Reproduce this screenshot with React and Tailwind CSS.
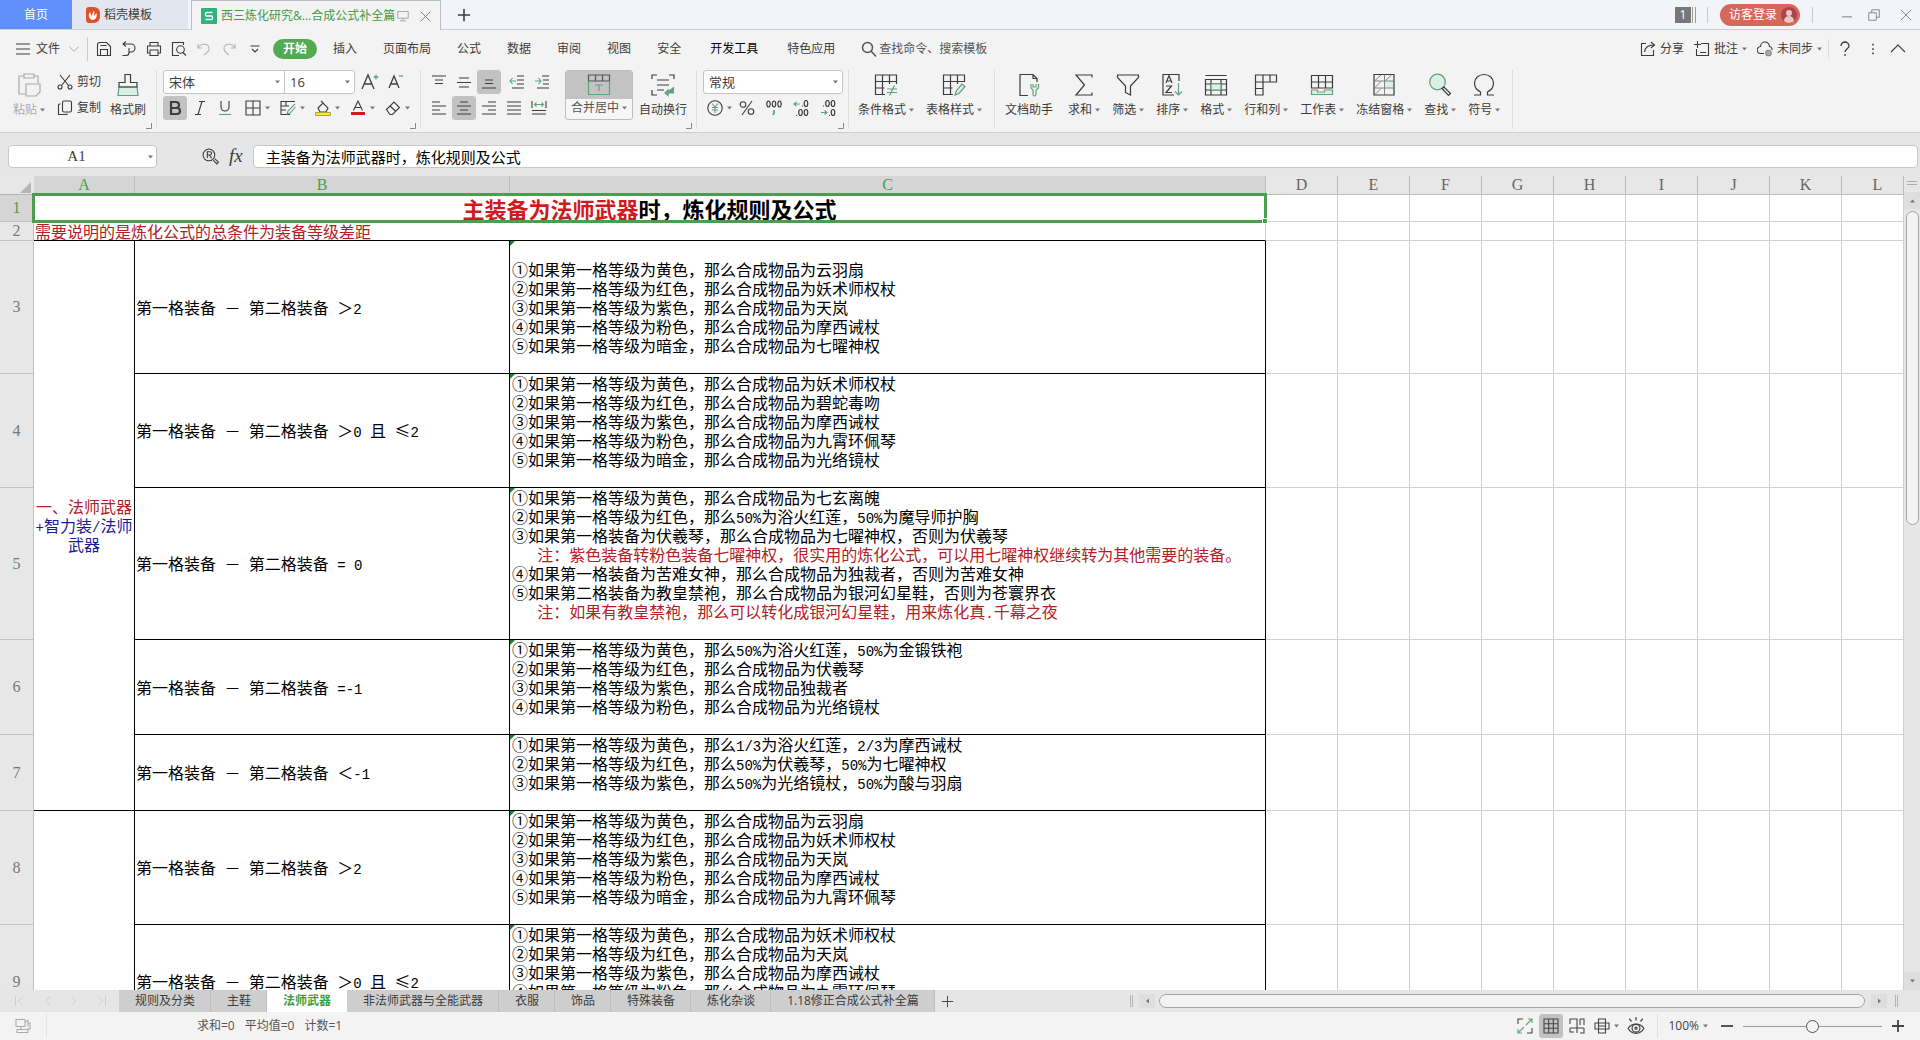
import React, { useState } from 'react';

const GREEN = '#5fa37c';

const Icon = ({ size = 16, box = 16, width = 1.1, className = '', children }) => (
  <svg
    width={size}
    height={size}
    viewBox={`0 0 ${box} ${box}`}
    fill="none"
    stroke="currentColor"
    strokeWidth={width}
    className={`shrink-0 ${className}`}
    aria-hidden="true"
  >
    {children}
  </svg>
);

const BigIcon = ({ children, className }) => (
  <Icon size={24} box={24} width={1.2} className={className}>{children}</Icon>
);

const Caret = ({ className = '' }) => (
  <svg width="5" height="4" viewBox="0 0 5 4" fill="#777" className={`shrink-0 ${className}`} aria-hidden="true">
    <path d="M0 0.5h5L2.5 3.5z" />
  </svg>
);

const icons = {
  menu: <Icon><path d="M1 3h14M1 8h14M1 13h14" /></Icon>,
  chevronDown: <Icon size={12} className="text-[#999]"><path d="M2 5l6 6 6-6" /></Icon>,
  save: <Icon><path d="M1.500 14.500v-11a2 2 0 0 1 2-2h7l4 4v9zM4.500 14.500v-6h7v6M4.500 4.500h6" /></Icon>,
  exportIcon: <Icon><path d="M2 3h8a4 4 0 0 1 0 8H8M5 .5L2 3l3 2.500M8 7v4.500a3 3 0 0 1-3 3H1.500" /></Icon>,
  print: <Icon><path d="M4 5V1.500h8V5M4 12H1.500V5h13v7H12M4 9h8v5.500H4z" /></Icon>,
  preview: <Icon><path d="M8 14.500H1.500v-13h11V4M15 14.500l-3-3" /><circle cx="9.500" cy="8.500" r="3.800" /></Icon>,
  undo: <Icon className="text-[#b5b5b5]"><path d="M2 3v4h4M2 7c3-5 10-5 11 0 .5 3-2 5-5 7" /></Icon>,
  redo: <Icon className="text-[#b5b5b5]"><path d="M14 3v4h-4M14 7c-3-5-10-5-11 0-.5 3 2 5 5 7" /></Icon>,
  more: <Icon size={12} width={1.5}><path d="M2 4h12M4 8l4 4 4-4" /></Icon>,
  search: <Icon width={1.5}><circle cx="6.500" cy="6.500" r="5" /><path d="M10 10l5 5.500" /></Icon>,
  share: <Icon><path d="M6 2.500H1.500v12h12V9M4.500 11C5 6.500 8 4 14 4M11 1l3.500 3-3.500 3" /></Icon>,
  comment: <Icon><path d="M7 2.500h7.500v12h-12V8M3.500 0v7M0 3.500h7M6 11.500h6" /></Icon>,
  sync: <Icon><path d="M7 12.500H4a3.500 3.500 0 0 1-.5-7 4.500 4.500 0 0 1 9 0A3 3 0 0 1 15 9" /><circle cx="11.500" cy="12" r="2.800" fill="#aaa" stroke="#888" /></Icon>,
  collapse: <Icon><path d="M1 11l7-7 7 7" /></Icon>,
  cut: <Icon><path d="M3 1l8.500 10.500M13 1L4.500 11.500" /><circle cx="3" cy="13" r="2" /><circle cx="13" cy="13" r="2" /></Icon>,
  copy: <Icon><rect x="5.500" y="1" width="9" height="11" rx="1.500" /><path d="M3.500 4H2.500A1 1 0 0 0 1.500 5v9.500h8.500v-1" /></Icon>,
  borders: <Icon><path d="M1 1h14v14H1zM8 1v14M1 8h14" /></Icon>,
  drawBorder: <Icon><path d="M10 14.500H1v-13h14M1 6h8M6 1.500V6M1 10h5" /><path d="M15 4l-7 7-1 3 3-1 5.500-6" stroke={GREEN} /></Icon>,
  fill: <Icon><path d="M3 8l5-5 5 5-2 4H5zM6 1l3 3" /><rect x=".5" y="12.500" width="15" height="3" rx="1" fill="#f4ee2b" stroke="#aaa53c" /></Icon>,
  eraser: <Icon><path d="M1.500 9.500L9 2l5.500 5.500-7 7H5zM5 6l6 5.500" /></Icon>,
};

const lines = {
  top: <Icon><path d="M1 2h14M4 6h8M4 9.500h8" /></Icon>,
  middle: <Icon><path d="M3 4h10M1 8.500h14M3 13h10" /></Icon>,
  bottom: <Icon><path d="M4 6h8M4 9.500h8M1 14h14" /></Icon>,
  outdent: <Icon><path d="M8 2h7M8 6h7M8 10h7M3 14h12" /><path d="M1 7h6M3.500 4L1 7l2.500 3" stroke={GREEN} /></Icon>,
  indent: <Icon><path d="M8 2h7M9 6h6M9 10h6M3 14h12" /><path d="M1 7h6M4.500 4L7 7l-2.500 3" stroke={GREEN} /></Icon>,
  left: <Icon><path d="M1 2h8M1 6h14M1 10h8M1 14h14" /></Icon>,
  center: <Icon><path d="M4 2h8M1 6h14M4 10h8M1 14h14" /></Icon>,
  right: <Icon><path d="M7 2h8M1 6h14M7 10h8M1 14h14" /></Icon>,
  justify: <Icon><path d="M1 2h14M1 6h14M1 10h14M1 14h14" /></Icon>,
  distribute: <Icon><path d="M1 1v7M15 1v7M1 10.500h14M1 14h14" /><path d="M3 4.500h10M5.500 2.500l-2 2 2 2M10.500 2.500l2 2-2 2" stroke={GREEN} /></Icon>,
};

const Label = ({ children, caret }) => (
  <span className="flex h-[18px] items-center gap-[3px] whitespace-nowrap">
    {children}
    {caret && <Caret />}
  </span>
);

const BigButton = ({ icon, label, caret = true, className = '' }) => (
  <button type="button" className={`flex shrink-0 flex-col items-center gap-1 pt-[3px] ${className}`}>
    {icon}
    <Label caret={caret}>{label}</Label>
  </button>
);

const SmallButton = ({ label, active, caret, children }) => (
  <button
    type="button"
    aria-label={label}
    className={`flex h-6 min-w-6 shrink-0 items-center justify-center gap-1 rounded-[3px] ${active ? 'bg-[#c2c2c2]' : ''}`}
  >
    {children}
    {caret && <Caret />}
  </button>
);

const Group = ({ corner, className = '', children }) => (
  <div className={`relative flex h-[59px] shrink-0 items-start border-r border-[#dedede] ${className}`}>
    {children}
    {corner && (
      <svg width="6" height="6" viewBox="0 0 6 6" className="absolute right-1 bottom-0" fill="none" stroke="#888" aria-hidden="true">
        <path d="M0 5.500h5.500V0" />
      </svg>
    )}
  </div>
);

const Picker = ({ label, options, className = '' }) => (
  <div className={`relative flex h-full items-center ${className}`}>
    <select aria-label={label} className="h-full w-full appearance-none bg-transparent pl-[5px] text-[13px] outline-none">
      {options.map((option) => (
        <option key={option}>{option}</option>
      ))}
    </select>
    <Caret className="pointer-events-none absolute right-1" />
  </div>
);

const TitleBar = () => (
  <div className="flex h-[30px] shrink-0 items-stretch border-b border-[#c8cdd6] bg-[#f2f4f9]">
    <button type="button" className="w-[72px] shrink-0 bg-[#5f8ffa] text-white">首页</button>
    <button type="button" className="flex w-[116px] shrink-0 items-center gap-1 bg-[#e2e6ef] pl-[14px]">
      <svg width="14" height="16" viewBox="0 0 14 16" aria-hidden="true">
        <path d="M3 0h5a6 6 0 0 1 6 6v4a6 6 0 0 1-6 6H3a3 3 0 0 1-3-3V3a3 3 0 0 1 3-3z" fill="#e2502b" />
        <path d="M6.500 13C2.500 12 2 8 4 5l1.500 4L8 3.500c1 2 0 4-.5 6L10.500 6c1 4-1 7-4 7z" fill="#fff" />
      </svg>
      稻壳模板
    </button>
    <div className="-mb-px ml-[3px] flex w-[250px] shrink-0 items-center border border-b-0 border-[#b9bec8] bg-[#f3f3f3] pt-px pl-[9px] text-[#3f9b45]">
      <svg width="16" height="16" viewBox="0 0 16 16" className="mr-1 shrink-0" aria-hidden="true">
        <rect width="16" height="16" rx="1" fill="#2fb27e" />
        <path d="M11.500 4.500h-6a1.200 1.200 0 0 0-1 1.200v1.100a1.200 1.200 0 0 0 1 1.200h5a1.200 1.200 0 0 1 1 1.200v1.100a1.200 1.200 0 0 1-1 1.200h-6" fill="none" stroke="#fff" strokeWidth="1.300" />
      </svg>
      <span className="whitespace-nowrap">西三炼化研究&amp;...合成公式补全篇</span>
      <Icon size={12} className="ml-[2px] text-[#999]"><path d="M1 2h14v9H1zM8 11v3M4 14.500h8" /></Icon>
      <button type="button" aria-label="关闭标签" className="ml-auto mr-2 text-[#777]">
        <Icon size={13}><path d="M2 2l12 12M14 2L2 14" /></Icon>
      </button>
    </div>
    <button type="button" aria-label="新建" className="ml-4 shrink-0">
      <Icon size={14} width={1.800}><path d="M8 1v14M1 8h14" /></Icon>
    </button>
    <div className="ml-auto flex items-center pt-px text-[#777]">
      <span className="flex h-4 w-4 items-center justify-center bg-[#777] text-white">1</span>
      <span className="ml-px h-4 w-1 border-x border-[#999]" />
      <span className="ml-[11px] h-4 w-px bg-[#ccc]" />
      <button type="button" className="ml-3 flex h-[22px] items-center gap-1 rounded-full bg-[#d6675b] pl-[9px] pr-[3px] text-white">
        访客登录
        <svg width="16" height="16" viewBox="0 0 16 16" aria-hidden="true">
          <circle cx="8" cy="8" r="8" fill="#a9444a" />
          <circle cx="8" cy="6" r="3" fill="#ecc5c8" />
          <path d="M3 14a5 5 0 0 1 10 0 8 8 0 0 1-10 0z" fill="#ecc5c8" />
        </svg>
      </button>
      <span className="ml-3 h-4 w-px bg-[#ccc]" />
      <button type="button" aria-label="最小化" className="ml-[29px]"><Icon size={10} width={1.500}><path d="M0 11h16" /></Icon></button>
      <button type="button" aria-label="还原" className="ml-4"><Icon size={12}><path d="M1 5h10v10H1zM5 5V1h10v10h-4" /></Icon></button>
      <button type="button" aria-label="关闭" className="ml-5 mr-2"><Icon size={12}><path d="M1 1l14 14M15 1L1 15" /></Icon></button>
    </div>
  </div>
);

const menus = ['插入', '页面布局', '公式', '数据', '审阅', '视图', '安全', '开发工具', '特色应用'];

const MenuBar = () => (
  <div className="flex h-[37px] shrink-0 items-center pt-px pr-[14px] pl-[15px]">
    <button type="button" className="flex items-center gap-[5px]">
      {icons.menu}文件
      <span className="ml-[3px]">{icons.chevronDown}</span>
    </button>
    <span className="mr-2 ml-[7px] h-6 w-px bg-[#ccc]" />
    <div className="flex items-center gap-[9px]">
      <button type="button" aria-label="保存">{icons.save}</button>
      <button type="button" aria-label="输出">{icons.exportIcon}</button>
      <button type="button" aria-label="打印">{icons.print}</button>
      <button type="button" aria-label="打印预览">{icons.preview}</button>
      <button type="button" aria-label="撤销">{icons.undo}</button>
      <button type="button" aria-label="恢复">{icons.redo}</button>
      <button type="button" aria-label="更多" className="ml-[3px]">{icons.more}</button>
    </div>
    <nav className="ml-3 flex items-center gap-[26px] whitespace-nowrap">
      <button type="button" className="-mr-[10px] h-5 rounded-full bg-[#52ab52] px-[10px] font-bold text-white">开始</button>
      {menus.map((menu) => (
        <button key={menu} type="button" className={menu === '开发工具' ? 'mx-[3px] text-black' : ''}>{menu}</button>
      ))}
      <button type="button" className="flex items-center gap-[2px] text-[#555]">{icons.search}查找命令、搜索模板</button>
    </nav>
    <div className="ml-auto flex items-center whitespace-nowrap">
      <button type="button" className="flex items-center gap-1">{icons.share}分享</button>
      <button type="button" className="ml-[10px] flex items-center gap-1">{icons.comment}批注<Caret /></button>
      <button type="button" className="ml-[10px] flex items-center gap-1">{icons.sync}未同步<Caret /></button>
      <span className="ml-[6px] h-5 w-px bg-[#ddd]" />
      <button type="button" aria-label="帮助" className="ml-2">
        <Icon width={1.300}><path d="M4 5a4 4 0 0 1 8 0c0 2.500-4 3-4 6M8 13v2" /></Icon>
      </button>
      <button type="button" aria-label="选项" className="ml-[7px] px-[6px]">
        <Icon size={14}><path d="M7 2h2v2H7zM7 7h2v2H7zM7 12h2v2H7z" fill="#555" stroke="none" /></Icon>
      </button>
      <button type="button" aria-label="折叠功能区" className="ml-1">{icons.collapse}</button>
    </div>
  </div>
);

const sheetTools = [
  { label: '求和', icon: <BigIcon><path d="M20 4.500V2H4l8.500 10L4 22h16v-2.500" /></BigIcon> },
  { label: '筛选', icon: <BigIcon><path d="M1.500 2h21v2.500L14.500 13v9l-5-2.500V13l-8-8.500z" /></BigIcon> },
  {
    label: '排序',
    icon: (
      <BigIcon>
        <path d="M19 8V1.500H3V22h11M6 10l3-7.500L12 10M7 8h4M6 13h5.500L6 19.500h6" />
        <path d="M18.500 10v12M15 18.500l3.500 3.500 3.500-3.500" stroke={GREEN} />
      </BigIcon>
    ),
  },
  {
    label: '格式',
    icon: (
      <BigIcon>
        <path d="M1.500 2.500h21M1.500 6.500h21V22h-21zM1.500 11h21M1.500 17h21M7 6.500V22M17 6.500V22" />
        <path d="M7 11h10v6H7z" stroke={GREEN} fill="#dcefe4" />
      </BigIcon>
    ),
  },
  { label: '行和列', icon: <BigIcon><path d="M1.500 2h21v7H9v13H1.500zM1.500 9H9M1.500 15.500H9M9 2v7M16 2v7" /></BigIcon> },
  {
    label: '工作表',
    icon: (
      <BigIcon>
        <path d="M1.500 2.500h21V15h-21zM1.500 9h21M8.500 2.500V15M15.500 2.500V15" />
        <path d="M1.500 17h6v2h7v-2h8v4.500h-21z" stroke={GREEN} fill="#dcefe4" />
      </BigIcon>
    ),
  },
  {
    label: '冻结窗格',
    icon: (
      <BigIcon width={1}>
        <path d="M12.500 8H22v7h-9.500z" fill="#dcefe4" stroke="none" />
        <path d="M2 1.500h20V22H2z" />
        <path d="M2 8h20M2 15h20M12.500 1.500V22M3 7.500l6-5.500M13.500 7.500l6-5.500M3 14.500L9 8.500M3 21.500l6-6" strokeWidth="0.900" stroke="#777" />
      </BigIcon>
    ),
  },
  {
    label: '查找',
    icon: (
      <BigIcon>
        <circle cx="9.500" cy="9" r="7.800" stroke={GREEN} fill="#dcefe4" />
        <path d="M14 15.500l6.500 7 2-2-6.500-6.500z" />
      </BigIcon>
    ),
  },
  { label: '符号', icon: <BigIcon><path d="M2 22h6.500v-3C4.500 17 2.500 13.500 2.500 10a9.500 8.500 0 0 1 19 0c0 3.500-2 7-6 9v3H22" /></BigIcon> },
];

const Ribbon = () => (
  <div className="flex h-[66px] shrink-0 border-b border-[#cfcfcf] pt-[3px]">
    <Group corner className="pl-[13px] pr-[10px]">
      <BigButton
        label="粘贴"
        className="text-[#aaa]"
        icon={<BigIcon><path d="M7 3H2v18h6M17 3h4v7M7 1h10v4H7zM9 11h14v8l-4 4H9z" /></BigIcon>}
      />
      <div className="ml-3 flex flex-col gap-[2px]">
        <button type="button" className="flex h-6 items-center gap-1">{icons.cut}剪切</button>
        <button type="button" className="flex h-6 items-center gap-1">{icons.copy}复制</button>
      </div>
      <BigButton
        label="格式刷"
        caret={false}
        className="ml-[9px]"
        icon={
          <BigIcon>
            <path d="M3 14h18l1 8.500H2z" fill="#dcefe4" stroke={GREEN} />
            <path d="M3 14V9.500h6V1.500h5.500v8H21V14z" />
          </BigIcon>
        }
      />
    </Group>

    <Group corner className="pl-[6px] pr-[10px]">
      <div className="flex flex-col gap-[2px]">
        <div className="flex h-6 items-center">
          <div className="flex h-6 w-[192px] divide-x divide-[#c4c4c4] rounded-[3px] border border-[#c4c4c4] bg-white">
            <Picker label="字体" options={['宋体', '黑体']} className="w-[121px]" />
            <Picker label="字号" options={['16', '12']} className="w-[69px]" />
          </div>
          <button type="button" aria-label="增大字号" className="ml-[6px]">
            <Icon size={18} box={18} width={1.300}><path d="M1 16L7 2l6 14M3 11h8" /><path d="M12.500 4h5M15 1.500v5" stroke={GREEN} /></Icon>
          </button>
          <button type="button" aria-label="减小字号" className="ml-2">
            <Icon size={18} box={18} width={1.300}><path d="M2 15L7 3l5 12M4 11h6" /><path d="M12 3h4" stroke={GREEN} /></Icon>
          </button>
        </div>
        <div className="flex items-center gap-px">
          <SmallButton label="加粗" active><Icon width={2.200}><path d="M4 2h5a3 3 0 0 1 0 6H4zM4 8h6a3 3 0 0 1 0 6H4z" /></Icon></SmallButton>
          <SmallButton label="倾斜"><Icon><path d="M7 1.500h6M3 14.500h6M10 1.500l-4 13" /></Icon></SmallButton>
          <SmallButton label="下划线"><Icon><path d="M4 1v6a4 4 0 0 0 8 0V1" /><path d="M2 14.500h12" stroke={GREEN} /></Icon></SmallButton>
          <div className="ml-[7px] flex items-center gap-[10px]">
            <SmallButton label="边框" caret>{icons.borders}</SmallButton>
            <SmallButton label="绘图边框" caret>{icons.drawBorder}</SmallButton>
            <SmallButton label="填充颜色" caret>{icons.fill}</SmallButton>
            <SmallButton label="字体颜色" caret>
              <Icon><path d="M3.500 10.500L8 1l4.500 9.500M5 7.500h6" /><path d="M1 13.500h14" stroke="#c81e1e" strokeWidth="3" /></Icon>
            </SmallButton>
            <SmallButton label="清除" caret>{icons.eraser}</SmallButton>
          </div>
        </div>
      </div>
    </Group>

    <Group corner className="pl-[6px] pr-[9px]">
      <div className="flex flex-col gap-[2px]">
        <div className="flex gap-px">
          <SmallButton label="顶端对齐">{lines.top}</SmallButton>
          <SmallButton label="垂直居中">{lines.middle}</SmallButton>
          <SmallButton label="底端对齐" active>{lines.bottom}</SmallButton>
          <span className="w-[2px]" />
          <SmallButton label="减少缩进">{lines.outdent}</SmallButton>
          <SmallButton label="增加缩进">{lines.indent}</SmallButton>
        </div>
        <div className="flex gap-px">
          <SmallButton label="左对齐">{lines.left}</SmallButton>
          <SmallButton label="水平居中" active>{lines.center}</SmallButton>
          <SmallButton label="右对齐">{lines.right}</SmallButton>
          <SmallButton label="两端对齐">{lines.justify}</SmallButton>
          <SmallButton label="分散对齐">{lines.distribute}</SmallButton>
        </div>
      </div>
      <button type="button" className="ml-[11px] flex h-[50px] w-[68px] flex-col items-center overflow-hidden rounded-[3px] border border-[#bdbdbd] bg-[#f6f6f6] text-[#555]">
        <span className="flex h-7 w-full items-center justify-center bg-[#c3c3c3]">
          <BigIcon>
            <path d="M1.500 8V2h21v6M8.500 2v6M15.500 2v6M1.500 8h21" />
            <path d="M1.500 8v13.500h21V8M8 12h8M12 12v6" stroke={GREEN} />
          </BigIcon>
        </span>
        <Label caret>合并居中</Label>
      </button>
      <BigButton
        label="自动换行"
        caret={false}
        className="ml-[6px]"
        icon={
          <BigIcon>
            <path d="M1 6V2h5M18 2h5v4M1 17v5h5M6 7h12M6 12h12M6 17h7" />
            <path d="M22.500 14v6H14M17 17l-3 3 3 2.500z" stroke={GREEN} fill="#5fa37c" />
          </BigIcon>
        }
      />
    </Group>

    <Group corner className="pl-[6px] pr-[5px]">
      <div className="flex flex-col gap-[2px]">
        <div className="h-6 w-[140px] rounded-[3px] border border-[#c4c4c4] bg-white">
          <Picker label="数字格式" options={['常规', '数值']} className="w-full" />
        </div>
        <div className="flex items-center justify-between pl-1 pr-[3px]">
          <SmallButton label="货币" caret>
            <Icon><circle cx="8" cy="8" r="7.200" /><path d="M5 3.500L8 7l3-3.500M8 7v6M5 7.500h6M5 10h6" stroke={GREEN} /></Icon>
          </SmallButton>
          <SmallButton label="百分比">
            <Icon><circle cx="4" cy="4.500" r="2.800" /><circle cx="12" cy="11.500" r="2.800" /><path d="M13 1L3 15" /></Icon>
          </SmallButton>
          <SmallButton label="千位分隔">
            <Icon width={1.200}><ellipse cx="2.500" cy="4" rx="1.700" ry="3" /><ellipse cx="8" cy="4" rx="1.700" ry="3" /><ellipse cx="13.500" cy="4" rx="1.700" ry="3" /><path d="M8 10v3l-1 2" stroke={GREEN} strokeWidth="1.800" /></Icon>
          </SmallButton>
          <SmallButton label="增加小数位">
            <Icon width={1.200}><ellipse cx="13" cy="3.500" rx="1.800" ry="3" /><ellipse cx="7.500" cy="12.500" rx="1.800" ry="3" /><ellipse cx="13" cy="12.500" rx="1.800" ry="3" /><path d="M9 6h1M3 15.500h1" /><path d="M1 4h6M3.500 2L1 4l2.500 2" stroke={GREEN} /></Icon>
          </SmallButton>
          <SmallButton label="减少小数位">
            <Icon width={1.200}><ellipse cx="7.500" cy="3.500" rx="1.800" ry="3" /><ellipse cx="13" cy="3.500" rx="1.800" ry="3" /><ellipse cx="13" cy="12.500" rx="1.800" ry="3" /><path d="M3 6h1M9 15.500h1" /><path d="M1 12.500h6M4.500 10.500l2.500 2-2.500 2" stroke={GREEN} /></Icon>
          </SmallButton>
        </div>
      </div>
    </Group>

    <Group className="gap-3 pl-[9px] pr-3">
      <BigButton
        label="条件格式"
        icon={
          <BigIcon>
            <path d="M11 21.500H1.500V2h21v9M1.500 8.500h21M8.500 2v19.500M15.500 2v9M1.500 15h9" />
            <path d="M13 16h10M13 19.500h10M20.500 12.500l-5 10" stroke={GREEN} />
          </BigIcon>
        }
      />
      <BigButton
        label="表格样式"
        icon={
          <BigIcon>
            <path d="M11 21.500H1.500V2h21v7M1.500 8.500h21M8.500 2v19.500M15.500 2v9M1.500 15h9" />
            <path d="M13 22l1.500-4.500L20 11l3 2.500-6 7z" stroke={GREEN} fill="#dcefe4" />
          </BigIcon>
        }
      />
    </Group>

    <Group className="gap-3 pl-[10px] pr-3">
      <BigButton
        label="文档助手"
        caret={false}
        className="mr-[3px]"
        icon={
          <BigIcon>
            <path d="M11 22.500H3V1.500h13l4 4V9M16 1.500v4h4" />
            <path d="M14 11v4l2 2v4.500a1.500 1.500 0 0 0 3 0V17l2.500-2v-4M16 11v3h3v-3" stroke={GREEN} />
          </BigIcon>
        }
      />
      {sheetTools.map((tool) => (
        <BigButton key={tool.label} label={tool.label} icon={tool.icon} />
      ))}
    </Group>
  </div>
);

const FormulaBar = ({ value, onChange }) => (
  <div className="flex h-[43px] shrink-0 items-start bg-[#e6e6e6] pt-3 pr-[2px] pl-2">
    <div className="relative flex w-[149px] shrink-0 items-center">
      <input
        aria-label="名称框"
        defaultValue="A1"
        className="h-[23px] w-full rounded-[4px] border border-[#c8c8c8] bg-white pr-3 text-center font-['Liberation_Serif','Noto_Sans_CJK_SC',serif] text-[15px] outline-none"
      />
      <Caret className="absolute right-1" />
    </div>
    <button type="button" aria-label="浏览公式" className="ml-[45px] mt-[3px]">
      <Icon size={17} width={1}><circle cx="6.500" cy="6.500" r="5.500" /><path d="M5 9.500v-6h2.500a1.500 1.500 0 0 1 0 3H5M7 6.500l2 3M10.500 11.500l3.500 3.500 1.500-1.500-3.500-3.500" /></Icon>
    </button>
    <button type="button" aria-label="插入函数" className="ml-[10px] font-['Liberation_Serif',serif] text-[19px] leading-[22px] italic">fx</button>
    <input
      aria-label="编辑栏"
      value={value}
      onChange={(e) => onChange(e.target.value)}
      className="ml-[10px] h-[23px] min-w-0 flex-1 rounded-[4px] border border-[#c8c8c8] bg-white pl-3 text-[15px] text-black outline-none"
    />
  </div>
);

// half-width characters are set in a monospaced face, about half as wide as a full-width one
const CellText = ({ text }) =>
  text.split(/([\x20-\x7e]+)/).map((part, i) =>
    i % 2 ? (
      <span key={i} className="font-['Liberation_Mono',monospace] text-[14px] leading-none">{part}</span>
    ) : (
      part
    )
  );

const blue = 'text-[#1c1c96]';
const red = 'text-[#b32025]';

const rows = [
  {
    height: 'h-[133px]',
    middle: true,
    condition: '第一格装备 － 第二格装备 ＞2',
    results: [
      '①如果第一格等级为黄色，那么合成物品为云羽扇',
      '②如果第一格等级为红色，那么合成物品为妖术师权杖',
      '③如果第一格等级为紫色，那么合成物品为天岚',
      '④如果第一格等级为粉色，那么合成物品为摩西诫杖',
      '⑤如果第一格等级为暗金，那么合成物品为七曜神权',
    ],
  },
  {
    height: 'h-[114px]',
    condition: '第一格装备 － 第二格装备 ＞0 且 ≤2',
    results: [
      '①如果第一格等级为黄色，那么合成物品为妖术师权杖',
      '②如果第一格等级为红色，那么合成物品为碧蛇毒吻',
      '③如果第一格等级为紫色，那么合成物品为摩西诫杖',
      '④如果第一格等级为粉色，那么合成物品为九霄环佩琴',
      '⑤如果第一格等级为暗金，那么合成物品为光络镜杖',
    ],
  },
  {
    height: 'h-[152px]',
    condition: '第一格装备 － 第二格装备 = 0',
    results: [
      '①如果第一格等级为黄色，那么合成物品为七玄离魄',
      '②如果第一格等级为红色，那么50%为浴火红莲，50%为魔导师护胸',
      '③如果第一格装备为伏羲琴，那么合成物品为七曜神权，否则为伏羲琴',
      '   注：紫色装备转粉色装备七曜神权，很实用的炼化公式，可以用七曜神权继续转为其他需要的装备。',
      '④如果第一格装备为苦难女神，那么合成物品为独裁者，否则为苦难女神',
      '⑤如果第二格装备为教皇禁袍，那么合成物品为银河幻星鞋，否则为苍寰界衣',
      '   注：如果有教皇禁袍，那么可以转化成银河幻星鞋，用来炼化真.千幕之夜',
    ],
  },
  {
    height: 'h-[95px]',
    condition: '第一格装备 － 第二格装备 =-1',
    results: [
      '①如果第一格等级为黄色，那么50%为浴火红莲，50%为金锻铁袍',
      '②如果第一格等级为红色，那么合成物品为伏羲琴',
      '③如果第一格等级为紫色，那么合成物品独裁者',
      '④如果第一格等级为粉色，那么合成物品为光络镜杖',
    ],
  },
  {
    height: 'h-[76px]',
    condition: '第一格装备 － 第二格装备 ＜-1',
    results: [
      '①如果第一格等级为黄色，那么1/3为浴火红莲，2/3为摩西诫杖',
      '②如果第一格等级为红色，那么50%为伏羲琴，50%为七曜神权',
      '③如果第一格等级为紫色，那么50%为光络镜杖，50%为酸与羽扇',
    ],
  },
  {
    height: 'h-[114px]',
    condition: '第一格装备 － 第二格装备 ＞2',
    results: [
      '①如果第一格等级为黄色，那么合成物品为云羽扇',
      '②如果第一格等级为红色，那么合成物品为妖术师权杖',
      '③如果第一格等级为紫色，那么合成物品为天岚',
      '④如果第一格等级为粉色，那么合成物品为摩西诫杖',
      '⑤如果第一格等级为暗金，那么合成物品为九霄环佩琴',
    ],
  },
  {
    height: 'h-[114px]',
    condition: '第一格装备 － 第二格装备 ＞0 且 ≤2',
    results: [
      '①如果第一格等级为黄色，那么合成物品为妖术师权杖',
      '②如果第一格等级为红色，那么合成物品为天岚',
      '③如果第一格等级为紫色，那么合成物品为摩西诫杖',
      '④如果第一格等级为粉色，那么合成物品为九霄环佩琴',
    ],
  },
];

const emptyColumns = ['D', 'E', 'F', 'G', 'H', 'I', 'J', 'K', 'L'];

const EmptyCells = () =>
  emptyColumns.map((column) => <td key={column} className="border-r border-b border-[#d0d0d0]" />);

const RowHeader = ({ number, active }) => (
  <th
    scope="row"
    className={`border-r border-b border-[#c2c2c2] font-['Liberation_Serif',serif] text-[16px] leading-[18px] font-normal ${
      active ? 'bg-[#d5d5d5] text-[#4b9e4b]' : 'bg-[#e7e7e7] text-[#777]'
    }`}
  >
    {number}
  </th>
);

const Sheet = () => (
  <div className="min-w-0 flex-1 overflow-hidden bg-white">
    <table className="w-full table-fixed border-separate border-spacing-0 font-['Noto_Sans_CJK_SC',sans-serif] text-[16px] leading-[19px] whitespace-pre text-black">
      <colgroup>
        <col className="w-[34px]" />
        <col className="w-[101px]" />
        <col className="w-[375px]" />
        <col className="w-[756px]" />
        {emptyColumns.map((column) => (
          <col key={column} className={column === 'L' ? '' : 'w-[72px]'} />
        ))}
      </colgroup>
      <thead>
        <tr className="h-[19px] font-['Liberation_Serif',serif] leading-[18px]">
          <td className="border-b border-[#b5b5b5] bg-[#e7e7e7]">
            <svg width="11" height="11" viewBox="0 0 11 11" className="mt-1 mr-[3px] ml-auto" aria-hidden="true">
              <path d="M11 0v11H0z" fill="#b5b5b5" />
            </svg>
          </td>
          {['A', 'B', 'C'].map((column) => (
            <th key={column} scope="col" className="border-r border-b border-[#bcbcbc] bg-[#d5d5d5] font-normal text-[#4b9e4b]">
              {column}
            </th>
          ))}
          {emptyColumns.map((column) => (
            <th key={column} scope="col" className="overflow-hidden border-r border-b border-[#bcbcbc] bg-[#e7e7e7] font-normal text-[#666]">
              <div className="w-[71px]">{column}</div>
            </th>
          ))}
        </tr>
      </thead>
      <tbody>
        <tr className="h-[27px]">
          <RowHeader number={1} active />
          <td colSpan={3} className="relative z-10 border-r border-b border-[#d0d0d0] text-center text-[22px] leading-[26px] font-bold">
            <span className="text-[#d3191c]">主装备为法师武器</span>时，炼化规则及公式
            <span className="absolute -inset-[2px] border-[3px] border-[#4b9e4b]" />
            <span className="absolute -right-[3px] -bottom-[3px] size-[6px] border border-white bg-[#4b9e4b]" />
          </td>
          <EmptyCells />
        </tr>
        <tr className="h-[19px]">
          <RowHeader number={2} />
          <td colSpan={3} className={`border-r border-b border-r-[#d0d0d0] border-b-black pl-px leading-[18px] ${red}`}>
            需要说明的是炼化公式的总条件为装备等级差距
          </td>
          <EmptyCells />
        </tr>
        {rows.map((row, index) => (
          <tr key={index} className={row.height}>
            <RowHeader number={index + 3} />
            {index === 0 && (
              <td rowSpan={5} className={`border-r border-b border-black text-center ${blue}`}>
                <span className={red}>一、法师武器</span>
                <br />
                <CellText text="+智力装/法师" />
                <br />
                武器
              </td>
            )}
            {index === 5 && <td rowSpan={2} className="border-r border-b border-black" />}
            <td className="border-r border-b border-black pl-px">
              <CellText text={row.condition} />
            </td>
            <td className={`relative border-r border-b border-black pl-[2px] ${row.middle ? 'align-middle' : 'align-top'}`}>
              <svg width="5" height="5" viewBox="0 0 5 5" className="absolute top-0 left-0" aria-hidden="true">
                <path d="M0 0h5L0 5z" fill="#1f7a2e" />
              </svg>
              {row.results.map((line) => (
                <div key={line} className={`h-[19px] ${line.startsWith(' ') ? red : ''}`}>
                  <CellText text={line} />
                </div>
              ))}
            </td>
            <EmptyCells />
          </tr>
        ))}
      </tbody>
    </table>
  </div>
);

const VerticalScroll = () => (
  <div className="flex w-4 shrink-0 flex-col items-center bg-[#e6e6e6]">
    <span className="mt-[5px] h-1 w-[10px] border-y border-[#aaa]" />
    <button type="button" aria-label="向上滚动" className="mt-[7px] flex h-[17px] w-full items-center justify-center bg-[#dedede]">
      <Caret className="rotate-180" />
    </button>
    <div className="mt-[2px] h-[314px] w-[13px] rounded-full border border-[#a5a5a5] bg-[#f3f3f3]" />
    <button type="button" aria-label="向下滚动" className="mt-auto flex h-[18px] w-full items-center justify-center bg-[#dedede]">
      <Caret />
    </button>
  </div>
);

const tabs = ['规则及分类', '主鞋', '法师武器', '非法师武器与全能武器', '衣服', '饰品', '特殊装备', '炼化杂谈', '1.18修正合成公式补全篇'];

const SheetTabs = ({ active, onSelect }) => (
  <div className="flex h-[22px] shrink-0 items-stretch bg-[#e6e6e6]">
    <div className="flex w-[119px] shrink-0 items-center gap-[15px] pl-[14px] text-[#c8c8c8]">
      <button type="button" aria-label="第一张"><Icon size={12}><path d="M2 1v14M12 2L6 8l6 6" /></Icon></button>
      <button type="button" aria-label="上一张"><Icon size={12}><path d="M12 2L6 8l6 6" /></Icon></button>
      <button type="button" aria-label="下一张"><Icon size={12}><path d="M4 2l6 6-6 6" /></Icon></button>
      <button type="button" aria-label="最后一张"><Icon size={12}><path d="M4 2l6 6-6 6M14 1v14" /></Icon></button>
    </div>
    {tabs.map((tab) => (
      <button
        key={tab}
        type="button"
        onClick={() => onSelect(tab)}
        className={`shrink-0 border-r pr-[15px] pl-4 whitespace-nowrap ${
          tab === active ? 'border-white bg-white font-bold text-[#3fa03f]' : 'border-[#bdbdbd] bg-[#cecece]'
        }`}
      >
        {tab}
      </button>
    ))}
    <button type="button" aria-label="新建工作表" className="ml-[6px] shrink-0">
      <Icon size={13}><path d="M8 1v14M1 8h14" /></Icon>
    </button>
    <div className="ml-auto flex w-[790px] items-center">
      <span className="h-3 w-[3px] border-x border-[#b5b5b5]" />
      <button type="button" aria-label="向左滚动" className="ml-[6px] flex h-[14px] w-4 items-center justify-center bg-[#dedede]">
        <Caret className="rotate-90" />
      </button>
      <div className="ml-1 h-[14px] flex-1 rounded-full border border-[#a5a5a5] bg-[#f3f3f3]" />
      <button type="button" aria-label="向右滚动" className="ml-[6px] flex h-[14px] w-4 items-center justify-center bg-[#dedede]">
        <Caret className="-rotate-90" />
      </button>
      <span className="mr-[22px] ml-2 h-3 w-[3px] border-x border-[#b5b5b5]" />
    </div>
  </div>
);

const StatusBar = () => {
  const [zoom, setZoom] = useState(50);

  return (
    <div className="flex h-7 shrink-0 items-center pr-4 pl-[15px] text-[#555]">
      <Icon className="text-[#aaa]"><path d="M1 1.500h9v7H1zM10 4l3-1.500v6M13 5h2v6h-3M6 8.500V11M2 14.500v-3h11v3z" /></Icon>
      <span className="ml-[15px] h-6 w-px bg-[#e4e4e4]" />
      <div className="ml-[150px] flex gap-[10px]">
        <span>求和=0</span>
        <span>平均值=0</span>
        <span>计数=1</span>
      </div>
      <div className="ml-auto flex items-center text-[#444]">
        <button type="button" aria-label="全屏显示">
          <Icon><path d="M1 6V1h5M15 10v5h-5" /><path d="M9 7l6-6M11 1h4v4M7 9l-6 6M1 11v4h4" stroke={GREEN} /></Icon>
        </button>
        <button type="button" aria-label="普通视图" className="ml-[6px] flex size-6 items-center justify-center rounded-[3px] bg-[#c2c2c2]">
          <Icon><path d="M1 1h14v14H1zM1 5.700h14M1 10.300h14M5.700 1v14M10.300 1v14" /></Icon>
        </button>
        <button type="button" aria-label="分页预览" className="ml-[6px]">
          <Icon><path d="M1 6V1h7v14M1 10h14M11 1h4v6M1 10v4h4M15 10v5h-4M11 1v6" /></Icon>
        </button>
        <button type="button" aria-label="页面布局视图" className="ml-[9px] flex items-center gap-1">
          <Icon><path d="M4.500 1h7v14h-7zM1 5h14v6H1zM4.500 8h7" /></Icon>
          <Caret />
        </button>
        <button type="button" aria-label="护眼模式" className="ml-2">
          <Icon size={18}><path d="M1 10c3-5 11-5 14 0-3 6-11 6-14 0zM8 0v3M2 1.500l2 2.500M14 1.500L12 4" /><circle cx="8" cy="10" r="3.500" /><circle cx="8" cy="10" r="1" /></Icon>
        </button>
        <span className="ml-3 h-6 w-px bg-[#e0e0e0]" />
        <button type="button" className="ml-[10px] flex items-center gap-1">100%<Caret /></button>
        <button type="button" aria-label="缩小" className="ml-[13px]">
          <Icon size={12} width={2.400}><path d="M0 8h16" /></Icon>
        </button>
        <input
          type="range"
          aria-label="显示比例"
          value={zoom}
          onChange={(e) => setZoom(e.target.value)}
          className="mx-[10px] h-4 w-[139px] appearance-none bg-transparent [&::-webkit-slider-runnable-track]:h-px [&::-webkit-slider-runnable-track]:bg-[#999] [&::-webkit-slider-thumb]:-mt-[6px] [&::-webkit-slider-thumb]:size-[13px] [&::-webkit-slider-thumb]:appearance-none [&::-webkit-slider-thumb]:rounded-full [&::-webkit-slider-thumb]:border [&::-webkit-slider-thumb]:border-[#555] [&::-webkit-slider-thumb]:bg-[#f3f3f3]"
        />
        <button type="button" aria-label="放大">
          <Icon size={12} width={2.400}><path d="M0 8h16M8 0v16" /></Icon>
        </button>
      </div>
    </div>
  );
};

const App = () => {
  const [formula, setFormula] = useState('主装备为法师武器时，炼化规则及公式');
  const [activeTab, setActiveTab] = useState('法师武器');

  return (
    <div className="flex h-screen flex-col overflow-hidden bg-[#f3f3f3] font-['Open_Sans','Noto_Sans_CJK_SC',sans-serif] text-[12px] leading-[18px] text-[#3c3c3c]">
      <TitleBar />
      <MenuBar />
      <Ribbon />
      <FormulaBar value={formula} onChange={setFormula} />
      <div className="flex min-h-0 flex-1">
        <Sheet />
        <VerticalScroll />
      </div>
      <SheetTabs active={activeTab} onSelect={setActiveTab} />
      <StatusBar />
    </div>
  );
};

export default App;
